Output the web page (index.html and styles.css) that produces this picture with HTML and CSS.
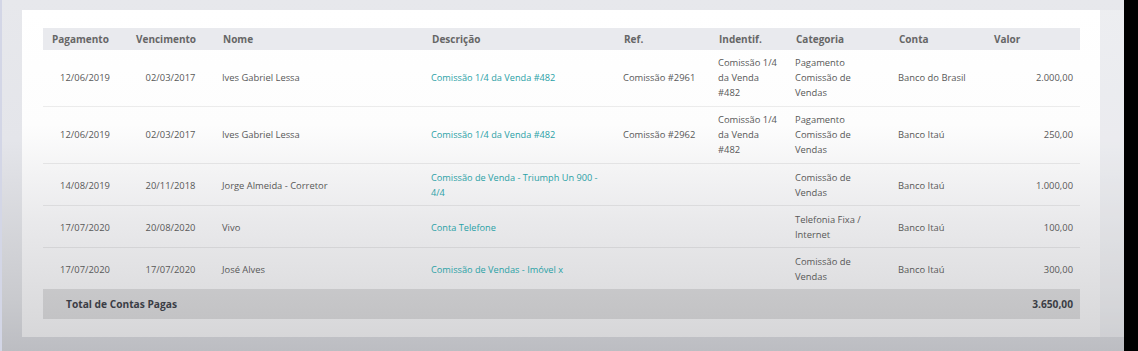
FILE: index.html
```html
<!DOCTYPE html>
<html lang="pt-BR">
<head>
<meta charset="utf-8">
<title>Contas Pagas</title>
<link rel="stylesheet" href="styles.css">
</head>
<body>
<div class="screen">
  <div class="main">
    <div class="card">
      <table class="report">
        <colgroup>
          <col class="c-pag"><col class="c-venc"><col class="c-nome"><col class="c-desc"><col class="c-ref"><col class="c-ident"><col class="c-cat"><col class="c-conta"><col class="c-valor">
        </colgroup>
        <thead>
          <tr>
            <th>Pagamento</th><th>Vencimento</th><th>Nome</th><th>Descrição</th><th>Ref.</th><th>Indentif.</th><th>Categoria</th><th>Conta</th><th>Valor</th>
          </tr>
        </thead>
        <tbody>
          <tr class="tall">
            <td class="date">12/06/2019</td><td class="date">02/03/2017</td><td>Ives Gabriel Lessa</td>
            <td class="link">Comissão 1/4 da Venda #482</td><td>Comissão #2961</td><td>Comissão 1/4<br>da Venda<br>#482</td>
            <td>Pagamento<br>Comissão de<br>Vendas</td><td>Banco do Brasil</td><td class="num">2.000,00</td>
          </tr>
          <tr class="tall">
            <td class="date">12/06/2019</td><td class="date">02/03/2017</td><td>Ives Gabriel Lessa</td>
            <td class="link">Comissão 1/4 da Venda #482</td><td>Comissão #2962</td><td>Comissão 1/4<br>da Venda<br>#482</td>
            <td>Pagamento<br>Comissão de<br>Vendas</td><td>Banco Itaú</td><td class="num">250,00</td>
          </tr>
          <tr>
            <td class="date">14/08/2019</td><td class="date">20/11/2018</td><td>Jorge Almeida - Corretor</td>
            <td class="link">Comissão de Venda - Triumph Un 900 -<br>4/4</td><td></td><td></td>
            <td>Comissão de<br>Vendas</td><td>Banco Itaú</td><td class="num">1.000,00</td>
          </tr>
          <tr>
            <td class="date">17/07/2020</td><td class="date">20/08/2020</td><td>Vivo</td>
            <td class="link">Conta Telefone</td><td></td><td></td>
            <td>Telefonia Fixa /<br>Internet</td><td>Banco Itaú</td><td class="num">100,00</td>
          </tr>
          <tr>
            <td class="date">17/07/2020</td><td class="date">17/07/2020</td><td>José Alves</td>
            <td class="link">Comissão de Vendas - Imóvel x</td><td></td><td></td>
            <td>Comissão de<br>Vendas</td><td>Banco Itaú</td><td class="num">300,00</td>
          </tr>
        </tbody>
        <tfoot>
          <tr>
            <td colspan="8" class="total-label">Total de Contas Pagas</td>
            <td class="num total-value">3.650,00</td>
          </tr>
        </tfoot>
      </table>
    </div>
  </div>
  <div class="edge"></div>
</div>
</body>
</html>
```

FILE: styles.css
```css
html, body {
  margin: 0;
  padding: 0;
  height: 100%;
  background: #000;
}
body {
  font-family: "Open Sans", "Liberation Sans", sans-serif;
  color: #555;
}
.screen {
  display: flex;
  width: 1138px;
  height: 351px;
  overflow: hidden;
}
.main {
  width: 1124px;
  height: 351px;
  box-sizing: border-box;
  padding: 10px 24px 14px 22px;
  background: linear-gradient(to bottom, #e7e8ec 0%, #e4e5ea 40%, #c9cace 85%, #bcbdc2 100%);
  border-left: 2px solid #d3d6e6;
}
.edge {
  flex: 1;
  background: #000;
}
.card {
  box-sizing: border-box;
  height: 327px;
  margin-left: -2px;
  padding: 18px 20px 0 21px;
  background: linear-gradient(to bottom, #ffffff 0%, #fdfdfd 35%, #e9e9eb 65%, #d7d7d9 100%);
  box-shadow: 24px 0 0 0 rgba(255, 255, 255, 0.25);
}
.report {
  width: 1037px;
  border-collapse: collapse;
  table-layout: fixed;
  font-size: 9.4px;
  line-height: 15px;
}
.c-pag { width: 84px; }
.c-venc { width: 87px; }
.c-nome { width: 209px; }
.c-desc { width: 192px; }
.c-ref { width: 95px; }
.c-ident { width: 77px; }
.c-cat { width: 103px; }
.c-conta { width: 95px; }
.c-valor { width: 95px; }

.report th {
  background: #e9eaee;
  color: #666;
  font-weight: 700;
  font-size: 10px;
  text-align: left;
  height: 22px;
  padding: 0 4px 0 9px;
}
.report td {
  padding: 6px 4px 5px 8px;
  vertical-align: middle;
  border-top: 1px solid rgba(0, 0, 0, 0.07);
  color: #585858;
}
.report tbody tr:first-child td {
  border-top: none;
}
.report tr.tall td {
  padding-top: 5px;
  padding-bottom: 6px;
}
.report td.date {
  text-align: center;
  padding-left: 4px;
  padding-right: 4px;
}
.report td.link {
  color: #2aa1a6;
  font-size: 9.2px;
}
.report td.num {
  text-align: right;
  padding-right: 7px;
}
.report tfoot td {
  background: rgba(0, 0, 0, 0.1);
  height: 30px;
  padding-top: 0;
  padding-bottom: 0;
  font-weight: 700;
  color: #3b3d45;
  font-size: 10.2px;
  border-top: none;
}
.report tfoot td.total-label {
  padding-left: 23px;
}
```
